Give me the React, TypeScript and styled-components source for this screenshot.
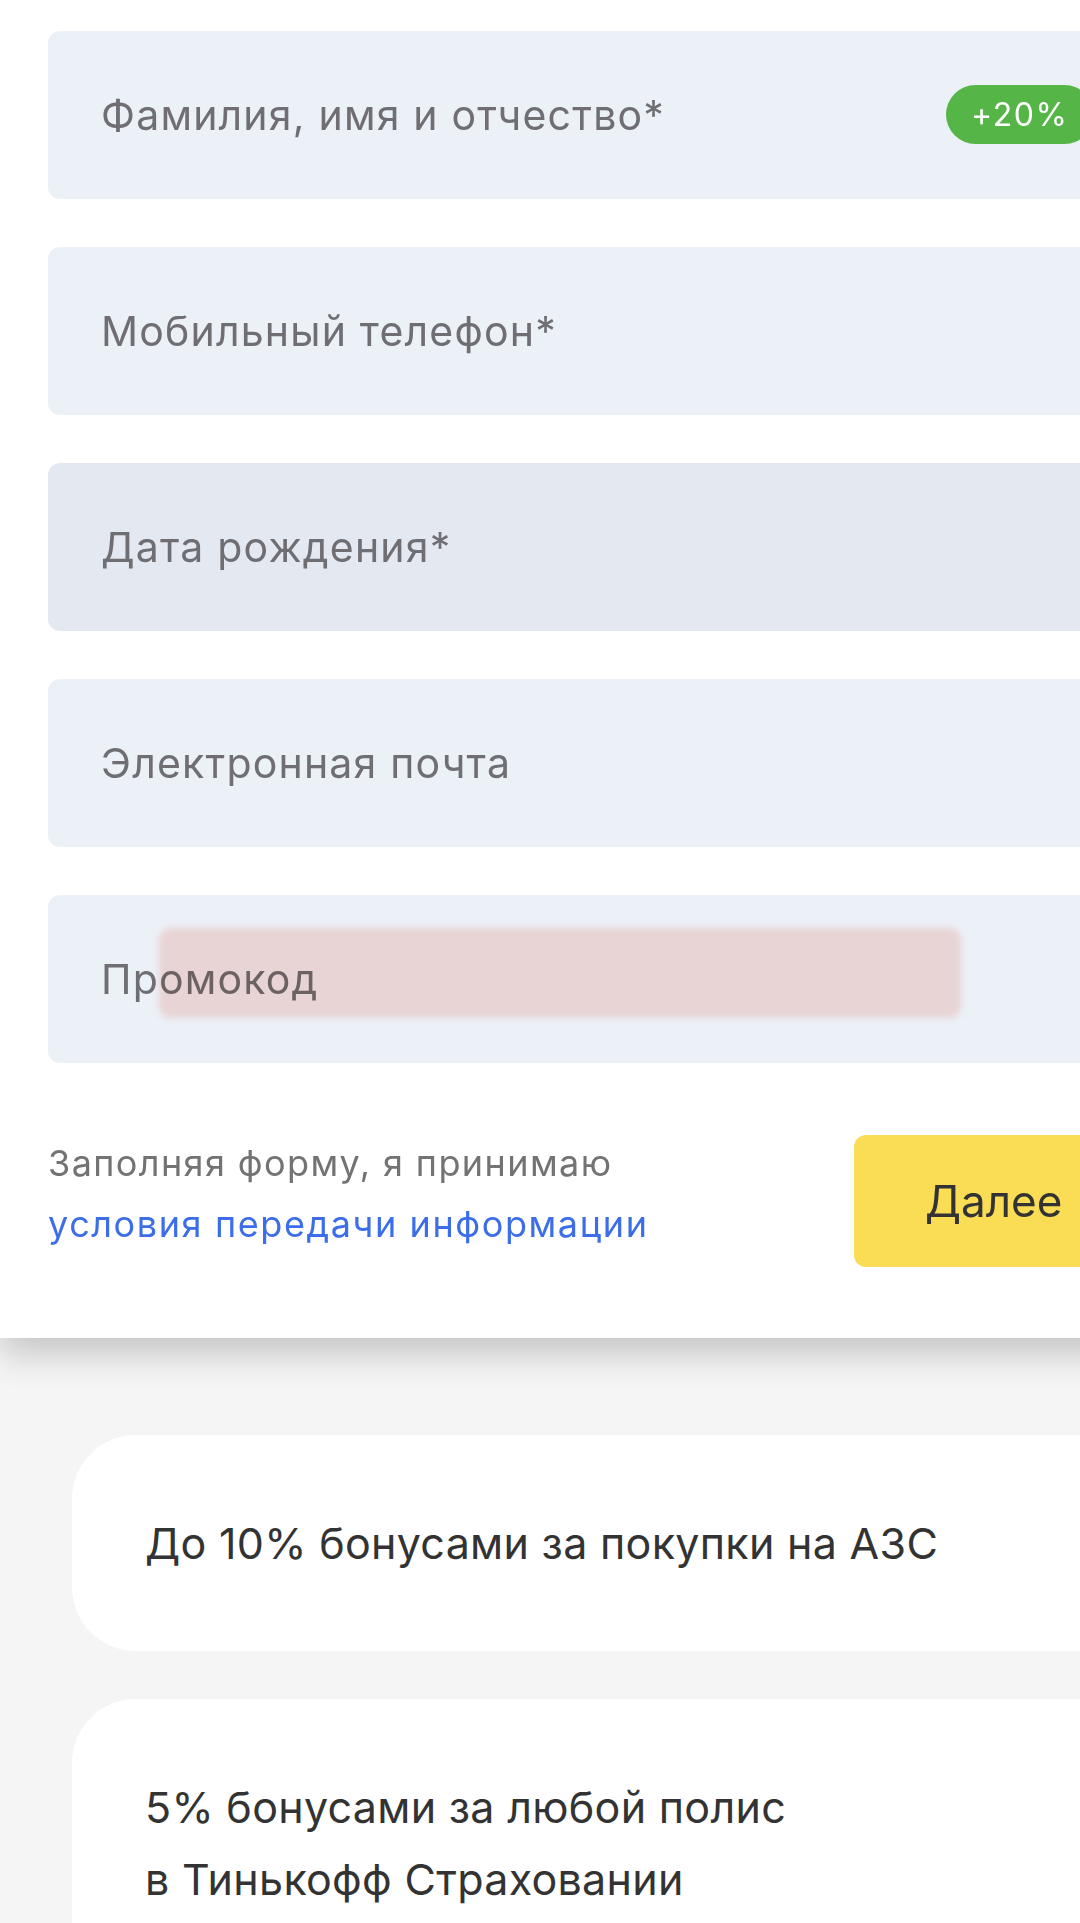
import React from "react";
import styled, { createGlobalStyle } from "styled-components";

const Global = createGlobalStyle`
  html, body {
    margin: 0;
    padding: 0;
    background: #f5f5f5;
  }
  body {
    font-family: Inter, "Noto Sans", Roboto, sans-serif;
    -webkit-font-smoothing: antialiased;
  }
`;

const Page = styled.div`
  width: 1080px;
  min-height: 1923px;
  overflow: hidden;
  background: #f5f5f5;
`;

const FormCard = styled.section`
  width: 1242px;
  box-sizing: border-box;
  background: #ffffff;
  padding: 31px 48px 71px 48px;
  display: flex;
  flex-direction: column;
  gap: 48px;
  box-shadow: 0 16px 34px rgba(0, 0, 0, 0.2);
  position: relative;
  z-index: 1;
`;

const Field = styled.div<{ $shade?: boolean }>`
  position: relative;
  height: 168px;
  border-radius: 12px;
  background: ${(p) => (p.$shade ? "#e4e8f1" : "#ecf0f7")};
  display: flex;
  align-items: center;
  padding: 0 0 0 53px;
  box-sizing: border-box;
`;

const Placeholder = styled.span`
  font-size: 41px;
  color: #6e6e73;
  letter-spacing: 1.2px;
`;

const Badge = styled.span`
  position: absolute;
  left: 898px;
  top: 54px;
  height: 59px;
  padding: 0 25px;
  border-radius: 30px;
  background: #55b647;
  color: #ffffff;
  font-size: 32px;
  letter-spacing: 1.6px;
  display: flex;
  align-items: center;
`;

const Redaction = styled.div`
  position: absolute;
  left: 111px;
  top: 33px;
  width: 802px;
  height: 90px;
  border-radius: 12px;
  background: #fbe2dc;
  mix-blend-mode: multiply;
  filter: blur(3px);
`;

const Footer = styled.div`
  display: flex;
  align-items: center;
  margin-top: 24px;
`;

const Consent = styled.p`
  flex: 0 0 806px;
  margin: -14px 0 0 0;
  font-size: 36px;
  line-height: 61px;
  letter-spacing: 1.4px;
  color: #737373;
`;

const ConsentLink = styled.a`
  display: block;
  color: #3b6ee8;
  letter-spacing: 1.6px;
  text-decoration: none;
`;

const NextButton = styled.button`
  flex: 0 0 300px;
  height: 132px;
  border: none;
  border-radius: 12px;
  background: #fadd55;
  color: #333333;
  font-family: inherit;
  font-size: 44px;
  text-align: left;
  padding: 0 0 0 71px;
`;

const Benefits = styled.div`
  display: flex;
  flex-direction: column;
  gap: 48px;
  padding: 97px 0 0 72px;
`;

const BenefitCard = styled.div`
  width: 1100px;
  box-sizing: border-box;
  background: #ffffff;
  border-radius: 64px;
  padding: 72px 73px;
  font-size: 43px;
  line-height: 72px;
  letter-spacing: 0.3px;
  color: #333333;
`;

export default function App() {
  return (
    <Page>
      <Global />
      <FormCard>
        <Field>
          <Placeholder>Фамилия, имя и отчество*</Placeholder>
          <Badge>+20%</Badge>
        </Field>
        <Field>
          <Placeholder>Мобильный телефон*</Placeholder>
        </Field>
        <Field $shade>
          <Placeholder>Дата рождения*</Placeholder>
        </Field>
        <Field>
          <Placeholder>Электронная почта</Placeholder>
        </Field>
        <Field>
          <Placeholder>Промокод</Placeholder>
          <Redaction />
        </Field>
        <Footer>
          <Consent>
            Заполняя форму, я принимаю
            <ConsentLink href="#">условия передачи информации</ConsentLink>
          </Consent>
          <NextButton>Далее</NextButton>
        </Footer>
      </FormCard>
      <Benefits>
        <BenefitCard>До 10% бонусами за покупки на АЗС</BenefitCard>
        <BenefitCard>
          5% бонусами за любой полис
          <br />в Тинькофф Страховании
        </BenefitCard>
      </Benefits>
    </Page>
  );
}
